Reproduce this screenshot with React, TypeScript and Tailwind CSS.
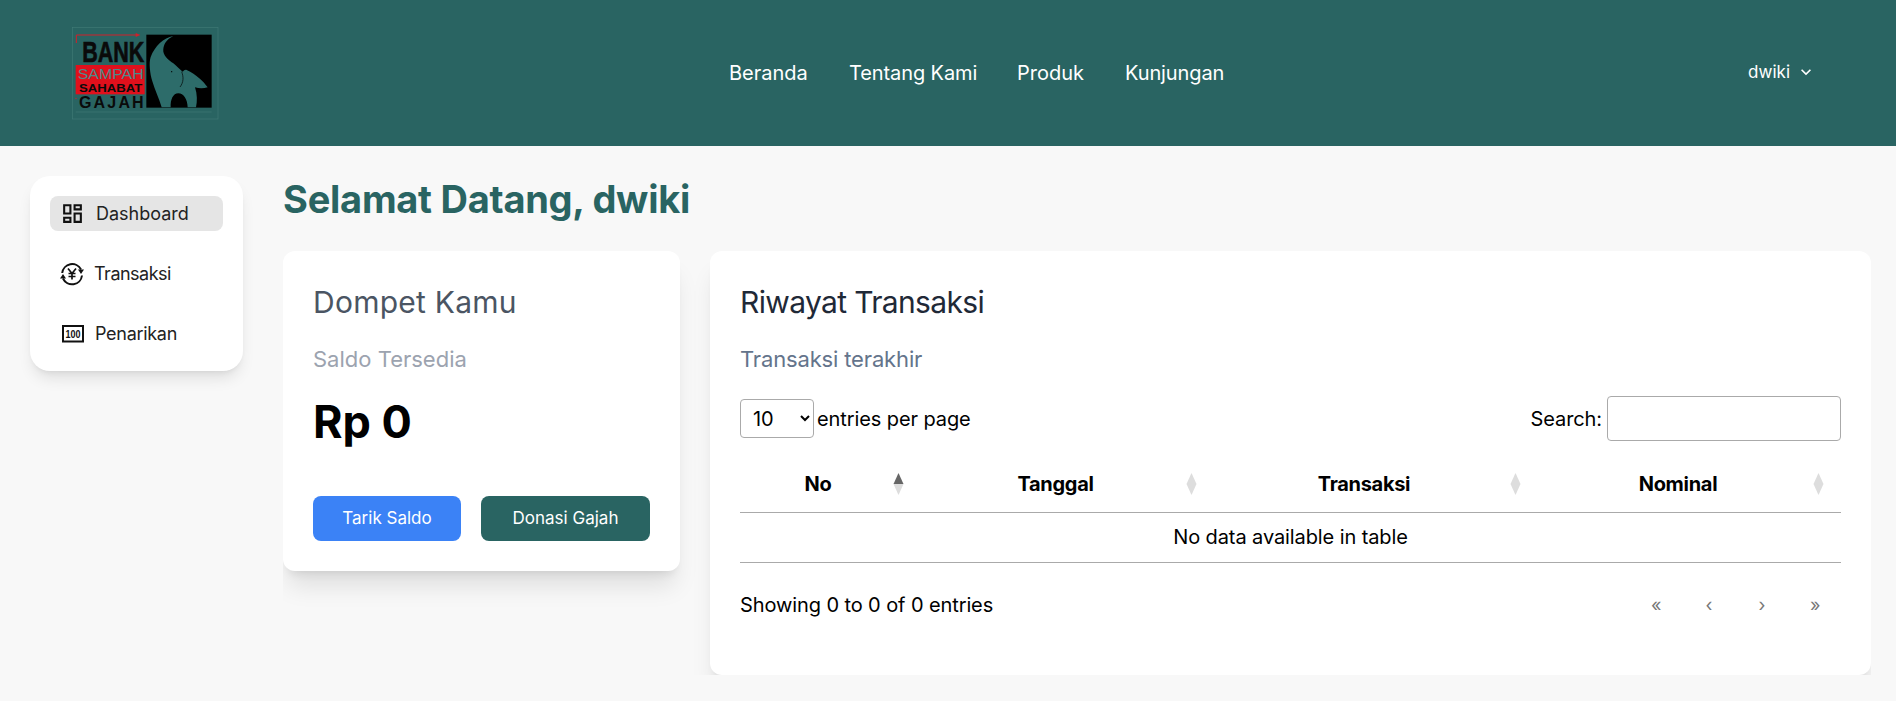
import React from "react";
import { MdOutlineDashboard, MdKeyboardArrowDown } from "react-icons/md";

function Logo() {
  return (
    <svg width="147" height="93" viewBox="97 82 441 279" className="block">
      <rect x="98" y="83" width="437" height="275" fill="none" stroke="#3f7a76" strokeWidth="2" />
      <path d="M110 130V106H295" fill="none" stroke="#d0202a" strokeWidth="3" />
      <path d="M288 100l14 6-14 6z" fill="#d0202a" />
      <line x1="108" y1="337" x2="516" y2="337" stroke="#3f7a76" strokeWidth="2" />
      <text x="128" y="186" textLength="186" lengthAdjust="spacingAndGlyphs" fontFamily="'Liberation Sans', sans-serif" fontWeight="700" fontSize="90" stroke="#0a0a0a" strokeWidth="2" fill="#0a0a0a">BANK</text>
      <rect x="108" y="196" width="207" height="88" fill="#e0101c" />
      <text x="114" y="238" textLength="198" lengthAdjust="spacingAndGlyphs" fontFamily="'Liberation Sans', sans-serif" fontSize="42" fill="#4d8a8a">SAMPAH</text>
      <text x="118" y="278" textLength="190" lengthAdjust="spacingAndGlyphs" fontFamily="'Liberation Sans', sans-serif" fontWeight="700" fontSize="34" fill="#0a0a0a">SAHABAT</text>
      <text x="118" y="326" textLength="194" lengthAdjust="spacing" fontFamily="'Liberation Sans', sans-serif" fontWeight="700" fontSize="48" fill="#0a0a0a">GAJAH</text>
      <circle cx="109" cy="296" r="2" fill="#d0202a" />
      <rect x="320" y="105" width="196" height="219" fill="#000" />
      <path
        d="M401 109C372 114 345 140 333 172C327 190 331 222 338 245C345 270 358 295 366 323H393C392 300 400 281 416 281C432 281 443 298 444 323H469C473 305 473 284 466 263C478 267 492 267 504 263C492 246 470 224 441 211C436 209 433 213 429 216C420 210 412 200 401 191C388 182 375 172 371 156C370 140 376 128 386 119C391 114 396 112 401 109Z"
        fill="#2d6c6a"
      />
      <path d="M426 216C432 232 432 248 421 262" fill="none" stroke="#000" strokeWidth="2" />
      <circle cx="396" cy="216" r="2" fill="#000" />
    </svg>
  );
}

function YenIcon() {
  return (
    <svg width="26" height="26" viewBox="0 0 26 26" className="block shrink-0">
      <path d="M3.2 12A10 10 0 0 1 22 8.5" fill="none" stroke="#111" strokeWidth="2" />
      <path d="M19 8.5h6l-3 4.5z" fill="#111" />
      <path d="M23 14.5A10 10 0 0 1 4 17.5" fill="none" stroke="#111" strokeWidth="2" />
      <path d="M1 17.5h6l-3-4.5z" fill="#111" />
      <path d="M9 7.5L13 12.5L17 7.5M13 12.5V18.5M9.5 12.5H16.5M9.5 15.5H16.5" fill="none" stroke="#111" strokeWidth="1.7" />
    </svg>
  );
}

function CashIcon() {
  return (
    <svg width="22" height="18" viewBox="0 0 22 18" className="block shrink-0">
      <rect x="1" y="1" width="20" height="15.5" fill="none" stroke="#111" strokeWidth="2" />
      <text x="3.5" y="13" textLength="15" lengthAdjust="spacingAndGlyphs" fontFamily="'Liberation Sans', sans-serif" fontWeight="700" fontSize="10.5" fill="#111">100</text>
    </svg>
  );
}

function Sort({ active }: { active?: boolean }) {
  return (
    <svg width="11" height="22" viewBox="0 0 11 22" className="block">
      <path d="M5.5 0L10.5 11H0.5z" fill={active ? "#666" : "#ddd"} />
      <path d="M5.5 22L10.5 11H0.5z" fill="#ddd" />
    </svg>
  );
}

const sans = "font-['Inter','Noto_Sans',sans-serif]";

export default function App() {
  return (
    <div className={`min-h-screen bg-[#f8f8f8] text-black ${sans}`}>
      <header className="h-[146px] bg-[#296462] flex items-center text-white relative">
        <div className="w-[72px]" />
        <div className="w-[147px]"><Logo /></div>
        <nav className="ml-[510px] flex gap-[40px] text-[20px] leading-none">
          <a className="w-[80px] whitespace-nowrap">Beranda</a>
          <a className="w-[128px] whitespace-nowrap tracking-[-0.1px]">Tentang Kami</a>
          <a className="w-[68px] whitespace-nowrap">Produk</a>
          <a className="w-[100px] whitespace-nowrap tracking-[-0.1px]">Kunjungan</a>
        </nav>
        <div className="ml-auto mr-[80px] flex items-center gap-[6px] text-[17px] leading-none -mt-[2px]">
          <span>dwiki</span>
          <MdKeyboardArrowDown size={20} />
        </div>
      </header>

      <div className="flex">
        <aside className="w-[283px] shrink-0 pl-[30px] pt-[30px]">
          <div className="w-[213px] h-[195px] bg-white rounded-[20px] shadow-lg p-[20px] flex flex-col gap-[25px] text-[18px] text-[#222]">
            <div className="h-[35px] rounded-[8px] bg-[#e5e5e5] flex items-center pl-[10px] gap-[11px]">
              <MdOutlineDashboard size={25} className="shrink-0 text-[#111]" />
              <span>Dashboard</span>
            </div>
            <div className="h-[35px] flex items-center pl-[9px] gap-[9px]">
              <YenIcon />
              <span className="tracking-[-0.5px]">Transaksi</span>
            </div>
            <div className="h-[35px] flex items-center pl-[12px] gap-[11px]">
              <CashIcon />
              <span className="tracking-[-0.3px]">Penarikan</span>
            </div>
          </div>
        </aside>

        <main className="w-[1588px] h-[529px] overflow-hidden">
          <h1 className="mt-[30px] h-[45px] text-[38px] leading-[46px] font-bold text-[#296462] tracking-[-0.25px]">Selamat Datang, dwiki</h1>
          <div className="mt-[30px] flex items-start gap-[30px]">
            <section className="w-[397px] h-[320px] shrink-0 bg-white rounded-[12px] shadow-xl p-[30px]">
              <h2 className="text-[30px] leading-[42px] text-[#4b5563] tracking-[0.25px]">Dompet Kamu</h2>
              <p className="mt-[22px] text-[22px] leading-[28px] text-[#9ca3af]">Saldo Tersedia</p>
              <p className="mt-[19px] text-[45px] leading-[60px] font-bold">Rp 0</p>
              <div className="mt-[44px] flex gap-[20px] text-[17px] text-white">
                <button className="w-[148px] h-[45px] rounded-[8px] bg-[#3b82f6]">Tarik Saldo</button>
                <button className="w-[169px] h-[45px] rounded-[8px] bg-[#296462]">Donasi Gajah</button>
              </div>
            </section>

            <section className="w-[1161px] h-[424px] shrink-0 bg-white rounded-[12px] shadow-xl p-[30px]">
              <h2 className="text-[30px] leading-[42px] text-[#1f2937] tracking-[-0.65px]">Riwayat Transaksi</h2>
              <p className="mt-[22px] text-[22px] leading-[28px] text-[#64748b] tracking-[-0.15px]">Transaksi terakhir</p>
              <div className="mt-[23px] h-[45px] flex items-center justify-between text-[20px] tracking-[-0.1px]">
                <label className="flex items-center gap-[3px]">
                  <select className="w-[74px] h-[39px] border border-[#aaa] rounded-[4px] pl-[8px] bg-white text-[20px]">
                    <option>10</option>
                  </select>
                  entries per page
                </label>
                <label className="flex items-center gap-[5px]">
                  Search:
                  <input className="w-[234px] h-[45px] border border-[#aaa] rounded-[4px] bg-white" />
                </label>
              </div>
              <table className="mt-[15px] w-full table-fixed border-collapse text-[20px] tracking-[-0.1px]">
                <colgroup>
                  <col className="w-[169px]" />
                  <col className="w-[293px]" />
                  <col className="w-[324px]" />
                  <col className="w-[315px]" />
                </colgroup>
                <thead>
                  <tr className="h-[56px] border-b border-[#aaa]">
                    <th className="relative font-bold text-center pr-[13px] tracking-[-0.3px]">No<span className="absolute right-[5px] top-[17px]"><Sort active /></span></th>
                    <th className="relative font-bold text-center tracking-[-0.3px]">Tanggal<span className="absolute right-[5px] top-[17px]"><Sort /></span></th>
                    <th className="relative font-bold text-center tracking-[-0.3px]">Transaksi<span className="absolute right-[5px] top-[17px]"><Sort /></span></th>
                    <th className="relative font-bold text-center pr-[11px] tracking-[-0.3px]">Nominal<span className="absolute right-[17px] top-[17px]"><Sort /></span></th>
                  </tr>
                </thead>
                <tbody>
                  <tr className="h-[50px] border-b border-[#aaa]">
                    <td colSpan={4} className="text-center">No data available in table</td>
                  </tr>
                </tbody>
              </table>
              <div className="mt-[26px] flex items-center justify-between text-[20px] tracking-[-0.1px] leading-[32px]">
                <span>Showing 0 to 0 of 0 entries</span>
                <div className="flex text-[18px] text-[#777] mr-[21px] gap-[43px]">
                  <span className="w-[10px] text-center">«</span>
                  <span className="w-[10px] text-center">‹</span>
                  <span className="w-[10px] text-center">›</span>
                  <span className="w-[10px] text-center">»</span>
                </div>
              </div>
            </section>
          </div>
        </main>
      </div>
    </div>
  );
}
